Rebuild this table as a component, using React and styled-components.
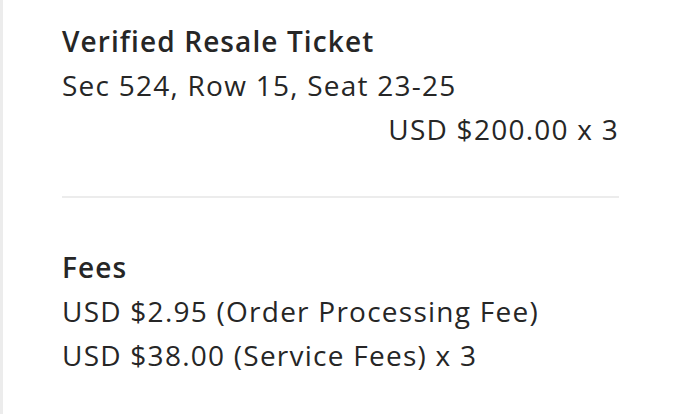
import React from "react"
import styled, { createGlobalStyle } from "styled-components"

const GlobalStyle = createGlobalStyle`
  body {
    margin: 0;
    background: #ffffff;
    font-family: "Open Sans", "Noto Sans", sans-serif;
    color: #262626;
  }
`

const Page = styled.div`
  height: 414px;
  border-left: 3px solid #ececec;
  padding: 19px 61px 0 59px;
  box-sizing: border-box;
`

const Section = styled.section`
  display: flex;
  flex-direction: column;
  padding: ${p => p.$top || 0}px 0 ${p => p.$bottom || 0}px;
`

const Title = styled.h3`
  margin: 0;
  font-size: 28px;
  line-height: 44px;
  font-weight: 600;
  letter-spacing: 1.1px;
`

const Line = styled.div`
  font-size: 28px;
  line-height: 44px;
  font-weight: 400;
  letter-spacing: 1.25px;
  text-align: ${p => (p.$right ? "right" : "left")};
`

const Divider = styled.hr`
  margin: 0;
  border: 0;
  border-top: 2px solid #ececec;
`

const App = () => {
    return (
        <>
            <GlobalStyle />
            <Page>
                <Section $bottom={45}>
                    <Title>Verified Resale Ticket</Title>
                    <Line>Sec 524, Row 15, Seat 23-25</Line>
                    <Line $right>USD $200.00 x 3</Line>
                </Section>
                <Divider />
                <Section $top={47}>
                    <Title>Fees</Title>
                    <Line>USD $2.95 (Order Processing Fee)</Line>
                    <Line>USD $38.00 (Service Fees) x 3</Line>
                </Section>
            </Page>
        </>
    )
}

export default App
